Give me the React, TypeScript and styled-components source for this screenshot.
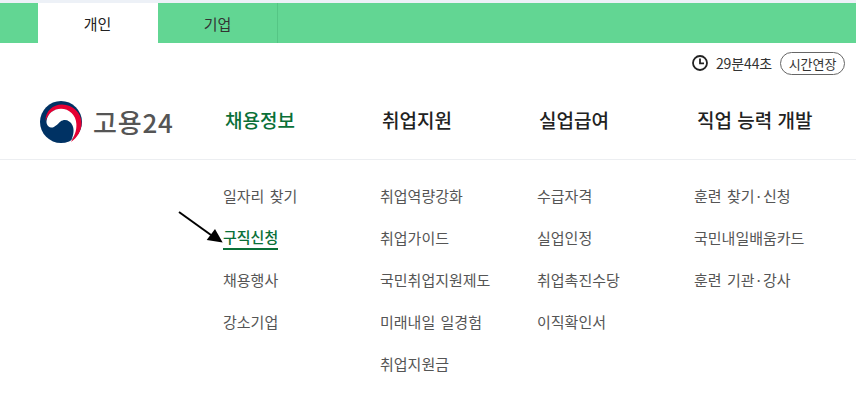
import styled, { createGlobalStyle } from "styled-components";

const menus = [
  { title: "채용정보", active: true, items: ["일자리 찾기", "구직신청", "채용행사", "강소기업"] },
  { title: "취업지원", items: ["취업역량강화", "취업가이드", "국민취업지원제도", "미래내일 일경험", "취업지원금"] },
  { title: "실업급여", items: ["수급자격", "실업인정", "취업촉진수당", "이직확인서"] },
  { title: "직업 능력 개발", items: ["훈련 찾기·신청", "국민내일배움카드", "훈련 기관·강사"] },
];

const App = () => {
  return (
    <>
      <GlobalStyle />
      <Page>
        <TabBar>
          <Tab $selected>개인</Tab>
          <Tab>기업</Tab>
        </TabBar>
        <TimerRow>
          <svg width="18" height="18" viewBox="0 0 18 18" fill="none" stroke="#222" strokeWidth="1.8">
            <circle cx="9" cy="9" r="7" />
            <path d="M9 4.500V9.300H13" />
          </svg>
          <TimeText>29분44초</TimeText>
          <ExtendButton>시간연장</ExtendButton>
        </TimerRow>
        <HeaderRow>
          <Logo>
            <svg width="42" height="42" viewBox="0 0 42 42">
              <circle cx="21" cy="21" r="21" fill="#003264" />
              <path
                d="M5.500 20C5.500 10 13 3.600 22 3.600C33 3.600 41.500 12 41.500 22C41.500 30 37 37 31 41C34 36 36 30 35.500 24C35 14 28 8 20.500 8C13 8 8 13 5.500 20Z"
                fill="#e60033"
              />
              <path
                d="M6.500 20C7.500 12.500 14 7.800 21 7.800C29 7.800 36 14 36.400 23C36.700 30 34.500 35 31 40C33.500 34 34.500 29 32.500 24.500C30 19 24.500 17.500 20.500 20.500C17 23.500 14.500 27 11 26.500C8 26 6.200 23 6.500 20Z"
                fill="#fff"
              />
            </svg>
            <LogoText>고용24</LogoText>
          </Logo>
          <Nav>
            {menus.map((menu) => (
              <NavTitle key={menu.title} $active={menu.active}>
                {menu.title}
              </NavTitle>
            ))}
          </Nav>
        </HeaderRow>
        <MenuPanel>
          {menus.map((menu) => (
            <MenuColumn key={menu.title}>
              {menu.items.map((item) => (
                <MenuRow key={item}>
                  <MenuLink $current={item === "구직신청"}>{item}</MenuLink>
                  {item === "구직신청" && (
                    <Pointer width="48" height="36" viewBox="0 0 48 36">
                      <path d="M1 1L33 24" stroke="#000" strokeWidth="2" fill="none" />
                      <path d="M44.700 31.500L28.700 29L37 18z" fill="#000" />
                    </Pointer>
                  )}
                </MenuRow>
              ))}
            </MenuColumn>
          ))}
        </MenuPanel>
      </Page>
    </>
  );
};

export default App;

const GlobalStyle = createGlobalStyle`
  html, body {
    margin: 0;
    padding: 0;
    background: #fff;
  }
  body {
    font-family: "Noto Sans CJK KR", "Noto Sans", sans-serif;
  }
`;

const Page = styled.div`
  width: 856px;
  height: 405px;
  overflow: hidden;
  padding-top: 3px;
  box-sizing: border-box;
  background: linear-gradient(#edf1f7 3px, #fff 3px);
`;

const TabBar = styled.div`
  display: flex;
  height: 40px;
  padding-left: 38px;
  background: #62d693;
`;

const Tab = styled.div<{ $selected?: boolean }>`
  width: 120px;
  box-sizing: border-box;
  display: flex;
  align-items: center;
  justify-content: center;
  font-size: 15px;
  color: ${(props) => (props.$selected ? "#222" : "#333")};
  background: ${(props) => (props.$selected ? "#fff" : "transparent")};
  border-right: 1px solid ${(props) => (props.$selected ? "#fff" : "#55c585")};
`;

const TimerRow = styled.div`
  display: flex;
  align-items: center;
  justify-content: flex-end;
  height: 24px;
  margin-top: 8px;
  padding-right: 11px;
`;

const TimeText = styled.span`
  margin-left: 7px;
  font-size: 14px;
  letter-spacing: -0.1px;
  color: #333;
`;

const ExtendButton = styled.span`
  margin-left: 8px;
  height: 23px;
  box-sizing: border-box;
  padding: 0 7.5px;
  display: flex;
  align-items: center;
  border: 1px solid #666;
  border-radius: 12px;
  font-size: 13px;
  color: #333;
`;

const HeaderRow = styled.div`
  display: flex;
  align-items: center;
  box-sizing: border-box;
  height: 85px;
  padding: 9px 0 0 40px;
  border-bottom: 1px solid #eceef1;
`;

const Logo = styled.div`
  display: flex;
  align-items: center;
  gap: 11px;
  width: 185px;
`;

const LogoText = styled.span`
  font-size: 26px;
  font-weight: 500;
  line-height: 1;
  letter-spacing: 0.8px;
  color: #555;
`;

const Nav = styled.nav`
  display: grid;
  grid-template-columns: 157px 157px 158px auto;
`;

const NavTitle = styled.div<{ $active?: boolean }>`
  margin-bottom: 5px;
  font-size: 19px;
  font-weight: 500;
  word-spacing: 1px;
  color: ${(props) => (props.$active ? "#0a7038" : "#222")};
`;

const MenuPanel = styled.div`
  display: grid;
  grid-template-columns: 157px 157px 157px auto;
  padding: 15px 0 0 223px;
`;

const MenuColumn = styled.ul`
  list-style: none;
  margin: 0;
  padding: 0;
`;

const MenuRow = styled.li`
  position: relative;
  height: 42px;
  display: flex;
  align-items: center;
`;

const MenuLink = styled.a<{ $current?: boolean }>`
  font-size: 15px;
  line-height: 22px;
  word-spacing: 2px;
  color: ${(props) => (props.$current ? "#0a7038" : "#555")};
  font-weight: ${(props) => (props.$current ? 500 : 400)};
  border-bottom: ${(props) => (props.$current ? "2px solid #0a7038" : "0")};
`;

const Pointer = styled.svg`
  position: absolute;
  left: -45px;
  top: -6px;
`;
